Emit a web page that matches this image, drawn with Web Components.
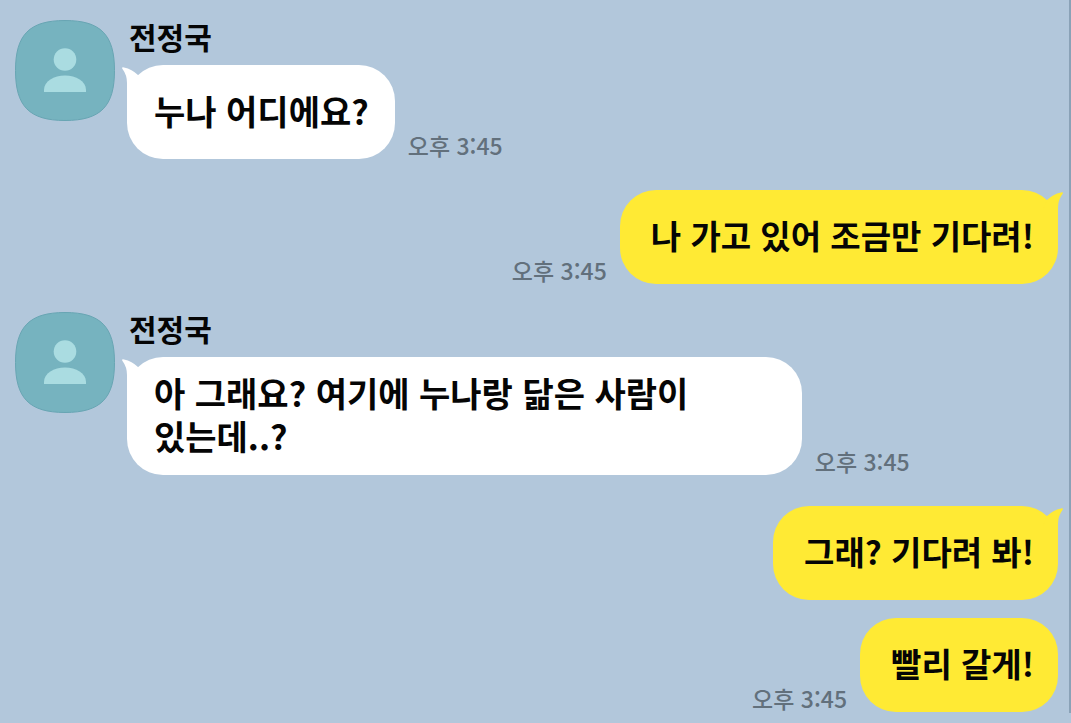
<!DOCTYPE html>
<html lang="ko">
<head>
<meta charset="utf-8">
<meta name="viewport" content="width=device-width, initial-scale=1">
<title>전정국</title>
<style>
  body {
    margin: 0;
    background: #b2c7db;
    color: #050505;
    font-family: "Noto Sans CJK KR", "Noto Sans", sans-serif;
    font-weight: 700;
  }
</style>
</head>
<body>
<chat-thread>
  <chat-group from="them" name="전정국">
    <chat-bubble from="them" tail time="오후 3:45">누나 어디에요?</chat-bubble>
  </chat-group>
  <chat-group from="me">
    <chat-bubble from="me" tail time="오후 3:45">나 가고 있어 조금만 기다려!</chat-bubble>
  </chat-group>
  <chat-group from="them" name="전정국">
    <chat-bubble from="them" tail time="오후 3:45">아 그래요? 여기에 누나랑 닮은 사람이 있는데..?</chat-bubble>
  </chat-group>
  <chat-group from="me">
    <chat-bubble from="me" tail>그래? 기다려 봐!</chat-bubble>
    <chat-bubble from="me" time="오후 3:45">빨리 갈게!</chat-bubble>
  </chat-group>
</chat-thread>

<script>
class ChatThread extends HTMLElement {
  constructor() {
    super();
    this.attachShadow({ mode: "open" }).innerHTML = `
      <style>
        :host {
          display: flex;
          flex-direction: column;
          gap: 28px;
          padding: 20px 11px 1px 15px;
          border-right: 2px solid #8aa2b7;
        }
      </style>
      <slot></slot>`;
  }
}

class ChatAvatar extends HTMLElement {
  constructor() {
    super();
    this.attachShadow({ mode: "open" }).innerHTML = `
      <style>
        :host { display: block; width: 100px; height: 101px; }
        svg { display: block; width: 100%; height: 100%; }
      </style>
      <svg viewBox="0 0 100 101" aria-hidden="true">
        <path d="M50 .5C86 .5 99.5 15 99.5 50.500S86 100.500 50 100.500 .5 86 .5 50.500 14 .5 50 .5Z" fill="#76b3bf" stroke="#68a5b3"/>
        <circle cx="50" cy="39.500" r="11.300" fill="#aadce1"/>
        <path d="M29 72V70C29 61 39 55.500 50 55.500S71 61 71 70V72Z" fill="#aadce1"/>
      </svg>`;
  }
}

class ChatGroup extends HTMLElement {
  connectedCallback() {
    if (this.shadowRoot) return;
    const name = this.getAttribute("name");
    this.attachShadow({ mode: "open" }).innerHTML = `
      <style>
        :host { display: flex; gap: 12px; }
        :host([from="me"]) { padding-top: 3px; }
        chat-avatar { flex: none; }
        .body { flex: 1; min-width: 0; }
        .name { font-size: 30px; line-height: 32px; padding: 0 0 13px 2px; }
        .list { display: flex; flex-direction: column; gap: 18px; }
      </style>
      ${name ? "<chat-avatar></chat-avatar>" : ""}
      <div class="body">
        ${name ? '<div class="name"></div>' : ""}
        <div class="list"><slot></slot></div>
      </div>`;
    if (name) this.shadowRoot.querySelector(".name").textContent = name;
  }
}

class ChatBubble extends HTMLElement {
  connectedCallback() {
    if (this.shadowRoot) return;
    const time = this.getAttribute("time");
    this.attachShadow({ mode: "open" }).innerHTML = `
      <style>
        :host {
          --fill: #fff;
          display: flex;
          align-items: flex-end;
          gap: 13px;
        }
        :host([from="me"]) { --fill: #ffea34; flex-direction: row-reverse; }
        .bubble {
          position: relative;
          box-sizing: border-box;
          display: flex;
          align-items: center;
          max-width: 63vw;
          min-height: 94px;
          padding: 14px 26px 18px 27px;
          border-radius: 36px;
          background: var(--fill);
          font-size: 34px;
          line-height: 43px;
          word-break: keep-all;
        }
        :host([from="me"]) .bubble { padding: 14px 24px 18px 31px; font-size: 33px; }
        .tail { position: absolute; top: 2px; left: -5px; width: 20px; height: 34px; fill: var(--fill); }
        :host([from="me"]) .tail { left: auto; right: -5px; transform: scaleX(-1); }
        time { flex: none; color: #62707c; font-size: 23px; line-height: 28px; font-weight: 500; }
      </style>
      <div class="bubble">
        ${this.hasAttribute("tail") ? '<svg class="tail" viewBox="0 0 20 34" aria-hidden="true"><path d="M0 1Q0 0 2 .4Q10 2 16 8L20 18V34H5V16Q5 8 .5 2Z"/></svg>' : ""}
        <span><slot></slot></span>
      </div>
      ${time ? '<time datetime="15:45"></time>' : ""}`;
    if (time) this.shadowRoot.querySelector("time").textContent = time;
  }
}

customElements.define("chat-avatar", ChatAvatar);
customElements.define("chat-thread", ChatThread);
customElements.define("chat-group", ChatGroup);
customElements.define("chat-bubble", ChatBubble);
</script>
</body>
</html>
